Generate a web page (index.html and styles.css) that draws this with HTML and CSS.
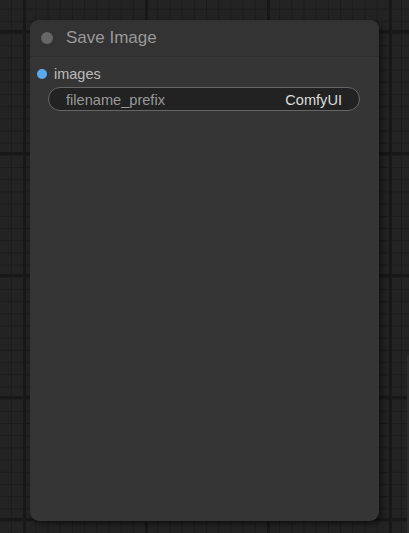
FILE: index.html
```html
<html>
  <head>
    <meta http-equiv="Content-Type" content="text/html; charset=UTF-8" />
    <title>Save Image</title>
    <link rel="stylesheet" href="styles.css">
  </head>
  <body>
  <div class="canvas">
    <div class="node">
      <div class="title">
        <span class="title-dot"></span>
        <span class="title-text">Save Image</span>
      </div>
      <div class="slots">
        <div class="slot">
          <span class="slot-dot"></span>
          <span class="slot-name">images</span>
        </div>
      </div>
      <div class="widget">
        <span class="widget-label">filename_prefix</span>
        <span class="widget-value">ComfyUI</span>
      </div>
    </div>
    <div class="edge"></div>
  </div>
  </body>
</html>
```

FILE: styles.css
```css
body {
  margin: 0;
  font-family: "Liberation Sans", Arial, sans-serif;
  background-color: #222;
}
.canvas {
  position: relative;
  width: 409px;
  height: 533px;
  overflow: hidden;
  box-sizing: border-box;
  padding: 20px 0 0 30px;
  background-color: #232323;
  background-image:
    linear-gradient(90deg, #181818 0, #181818 3px, transparent 3px),
    linear-gradient(0deg, #181818 0, #181818 3px, transparent 3px),
    linear-gradient(90deg, #1b1b1b 0, #1b1b1b 1px, transparent 1px),
    linear-gradient(0deg, #1b1b1b 0, #1b1b1b 1px, transparent 1px);
  background-size: 122px 122px, 122px 122px, 12.2px 12.2px, 12.2px 12.2px;
  background-position: 23px 0, 0 33px, 11px 0, 0 9.6px;
}
.node {
  width: 349px;
  height: 501px;
  background: #353535;
  border-radius: 9px;
  box-shadow: 3px 3px 6px rgba(0,0,0,0.5);
  display: flex;
  flex-direction: column;
}
.title {
  height: 37px;
  box-sizing: border-box;
  border-bottom: 1px solid #2e2e2e;
  background: #333;
  border-radius: 9px 9px 0 0;
  display: flex;
  align-items: center;
  padding-left: 11px;
}
.title-dot {
  width: 12px;
  height: 12px;
  border-radius: 50%;
  background: #666;
}
.title-text {
  margin-left: 13px;
  font-size: 17px;
  color: #999;
}
.slots {
  padding: 9px 0 0 7px;
}
.slot {
  display: flex;
  align-items: center;
  height: 16px;
}
.slot-dot {
  width: 10px;
  height: 10px;
  border-radius: 50%;
  background: #5aaaf0;
}
.slot-name {
  margin-left: 7px;
  font-size: 14.5px;
  color: #bbb;
}
.widget {
  margin: 5px 19px 0 18px;
  height: 24px;
  box-sizing: border-box;
  border: 1px solid #666;
  border-radius: 12px;
  background: #222;
  display: flex;
  align-items: center;
  justify-content: space-between;
  padding: 1px 17px 0 17px;
  font-size: 14.6px;
}
.widget-label {
  color: #999;
}
.widget-value {
  color: #ddd;
}
.edge {
  position: absolute;
  right: 0;
  top: 355px;
  width: 2px;
  height: 178px;
  background: #2c2c2c;
}
```
